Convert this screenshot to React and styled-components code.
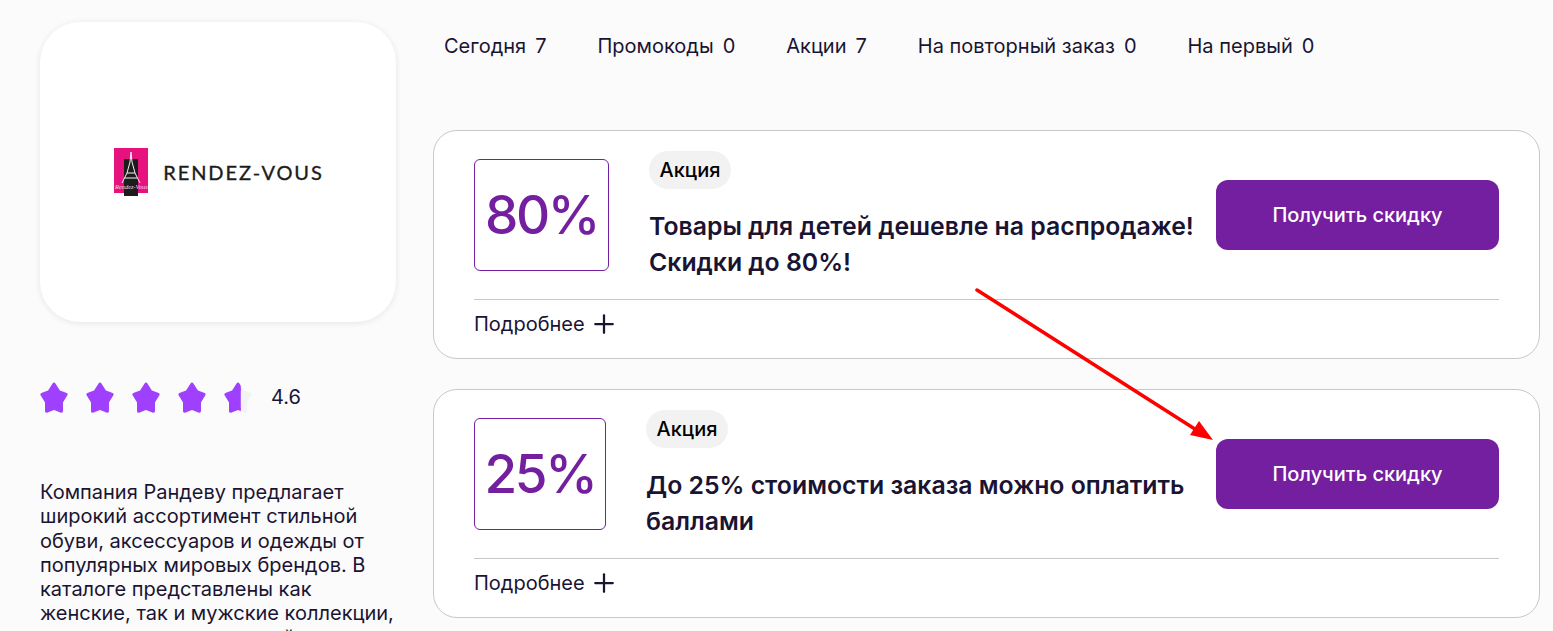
import React from 'react';
import styled, { createGlobalStyle } from 'styled-components';
import { Plus } from 'lucide-react';

const GlobalStyle = createGlobalStyle`
  html, body {
    margin: 0;
    padding: 0;
    height: 100%;
    overflow: hidden;
    background: #fbfbfb;
  }
  * {
    box-sizing: border-box;
  }
`;

const Page = styled.div`
  position: relative;
  display: flex;
  gap: 37px;
  height: 100vh;
  overflow: hidden;
  padding: 22px 13px 0 40px;
  font-family: Inter, "Noto Sans", sans-serif;
  color: #1a1433;
`;

const Sidebar = styled.aside`
  flex: 0 0 356px;
  display: flex;
  flex-direction: column;
`;

const LogoCard = styled.div`
  flex: 0 0 300px;
  display: flex;
  align-items: center;
  justify-content: center;
  gap: 14px;
  padding-left: 2px;
  background: #ffffff;
  border-radius: 40px;
  box-shadow: 0 1px 6px rgba(0, 0, 0, 0.09);
`;

const LogoText = styled.span`
  font-family: Lato, sans-serif;
  font-size: 20px;
  font-weight: 400;
  letter-spacing: 1.9px;
  -webkit-text-stroke: 0.35px #1c1c1c;
  color: #1c1c1c;
`;

const Rating = styled.div`
  flex: 0 0 30px;
  display: flex;
  align-items: center;
  gap: 18px;
  margin-top: 60px;
`;

const RatingValue = styled.span`
  margin: 0 0 2px 1px;
  font-size: 20px;
  color: #1a1433;
`;

const About = styled.p`
  margin: 67px 0 0;
  font-size: 20px;
  line-height: 24.3px;
  color: #1a1433;
`;

const Main = styled.main`
  flex: 1;
  display: flex;
  flex-direction: column;
`;

const Tabs = styled.nav`
  display: flex;
  gap: 51px;
  padding-left: 11px;
  height: 108px;
  padding-top: 12px;
`;

const Tab = styled.div`
  display: flex;
  gap: 9px;
  font-size: 20px;
  line-height: 24px;
  color: #1a1433;
`;

const CardList = styled.div`
  display: flex;
  flex-direction: column;
  gap: 30px;
`;

const Card = styled.article`
  height: 229px;
  padding: 20px 40px 0;
  background: #ffffff;
  border: 1px solid #c8c8c8;
  border-radius: 24px;
`;

const CardRow = styled.div`
  display: flex;
  align-items: center;
  gap: 40px;
  height: 149px;
  padding-bottom: 20px;
  border-bottom: 1px solid #c8c8c8;
`;

const Percent = styled.div`
  flex: 0 0 ${(p) => p.$width}px;
  height: 112px;
  display: flex;
  align-items: center;
  justify-content: center;
  border: 1px solid #741f9f;
  border-radius: 6px;
  font-size: 53px;
  font-weight: 550;
  letter-spacing: -2.4px;
  color: #741f9f;
`;

const Offer = styled.div`
  flex: 1;
  min-width: 0;
  align-self: flex-start;
`;

const Badge = styled.span`
  display: inline-flex;
  align-items: center;
  height: 38px;
  padding: 0 10.5px;
  border-radius: 19px;
  background: #f2f2f2;
  font-size: 20px;
  font-weight: 450;
  color: #000000;
`;

const OfferTitle = styled.h3`
  margin: 19px 0 0;
  font-size: 24.8px;
  line-height: 36px;
  font-weight: 600;
  color: #1a1433;
`;

const GetButton = styled.button`
  flex: 0 0 283px;
  height: 70px;
  margin-left: -22px;
  border: none;
  border-radius: 12px;
  background: #741f9f;
  color: #ffffff;
  font-family: inherit;
  font-size: 20px;
  font-weight: 500;
`;

const More = styled.div`
  display: flex;
  align-items: center;
  gap: 4px;
  height: 47px;
  font-size: 20px;
  color: #1a1433;
`;

const ArrowLayer = styled.svg`
  position: absolute;
  top: 0;
  left: 0;
  pointer-events: none;
`;

const STAR_POINTS = '14,2 18.8,9.6 26.08,12.43 21.5,20.1 21.47,29.3 14,26.4 6.53,29.3 6.5,20.1 1.92,12.43 9.2,9.6';

const Star = ({ part }) => (
  <svg width="28" height="31" viewBox="0 0 28 31">
    <defs>
      <clipPath id="part-star">
        <rect x="0" y="0" width="16.8" height="31" />
      </clipPath>
    </defs>
    {part && <polygon points={STAR_POINTS} fill="#f3f3f3" stroke="#f3f3f3" strokeWidth="3" strokeLinejoin="round" />}
    <g clipPath={part ? 'url(#part-star)' : undefined}>
      <polygon points={STAR_POINTS} fill="#a040ff" stroke="#a040ff" strokeWidth="3" strokeLinejoin="round" />
    </g>
  </svg>
);

const LogoMark = () => (
  <svg width="35" height="48" viewBox="0 0 35 48">
    <rect x="0" y="0" width="34" height="45" fill="#e8127f" />
    <rect x="10" y="11" width="14" height="37" fill="#1c1c1c" />
    <path
      d="M17 4L16 14L13 25L8 35M17 4L18 14L21 25L26 35M13 25H21M11 30H23"
      stroke="#f4f4f4"
      strokeWidth="1"
      fill="none"
    />
    <text x="1" y="41" fontSize="6.4" fill="#f6d5e6" fontFamily="Liberation Serif, serif" fontStyle="italic">
      Rendez-Vous
    </text>
  </svg>
);

const tabs = [
  { label: 'Сегодня', count: 7 },
  { label: 'Промокоды', count: 0 },
  { label: 'Акции', count: 7 },
  { label: 'На повторный заказ', count: 0 },
  { label: 'На первый', count: 0 },
];

const offers = [
  { percent: '80%', width: 135, title: 'Товары для детей дешевле на распродаже! Скидки до 80%!' },
  { percent: '25%', width: 132, title: 'До 25% стоимости заказа можно оплатить баллами' },
];

const App = () => (
  <Page>
    <GlobalStyle />
    <Sidebar>
      <LogoCard>
        <LogoMark />
        <LogoText>RENDEZ-VOUS</LogoText>
      </LogoCard>
      <Rating>
        <Star />
        <Star />
        <Star />
        <Star />
        <Star part />
        <RatingValue>4.6</RatingValue>
      </Rating>
      <About>
        Компания Рандеву предлагает широкий ассортимент стильной обуви, аксессуаров и одежды от
        популярных мировых брендов. В каталоге представлены как женские, так и мужские коллекции,
        а также товары для детей
      </About>
    </Sidebar>
    <Main>
      <Tabs>
        {tabs.map((tab) => (
          <Tab key={tab.label}>
            <span>{tab.label}</span>
            <span>{tab.count}</span>
          </Tab>
        ))}
      </Tabs>
      <CardList>
        {offers.map((offer) => (
          <Card key={offer.percent}>
            <CardRow>
              <Percent $width={offer.width}>{offer.percent}</Percent>
              <Offer>
                <Badge>Акция</Badge>
                <OfferTitle>{offer.title}</OfferTitle>
              </Offer>
              <GetButton>Получить скидку</GetButton>
            </CardRow>
            <More>
              Подробнее
              <Plus size={30} strokeWidth={1.8} />
            </More>
          </Card>
        ))}
      </CardList>
    </Main>
    <ArrowLayer width="1553" height="631" viewBox="0 0 1553 631">
      <line x1="977" y1="290" x2="1198" y2="431" stroke="#ff0000" strokeWidth="3.5" strokeLinecap="round" />
      <polygon points="1213,440 1190,435 1199,421" fill="#ff0000" />
    </ArrowLayer>
  </Page>
);

export default App;
